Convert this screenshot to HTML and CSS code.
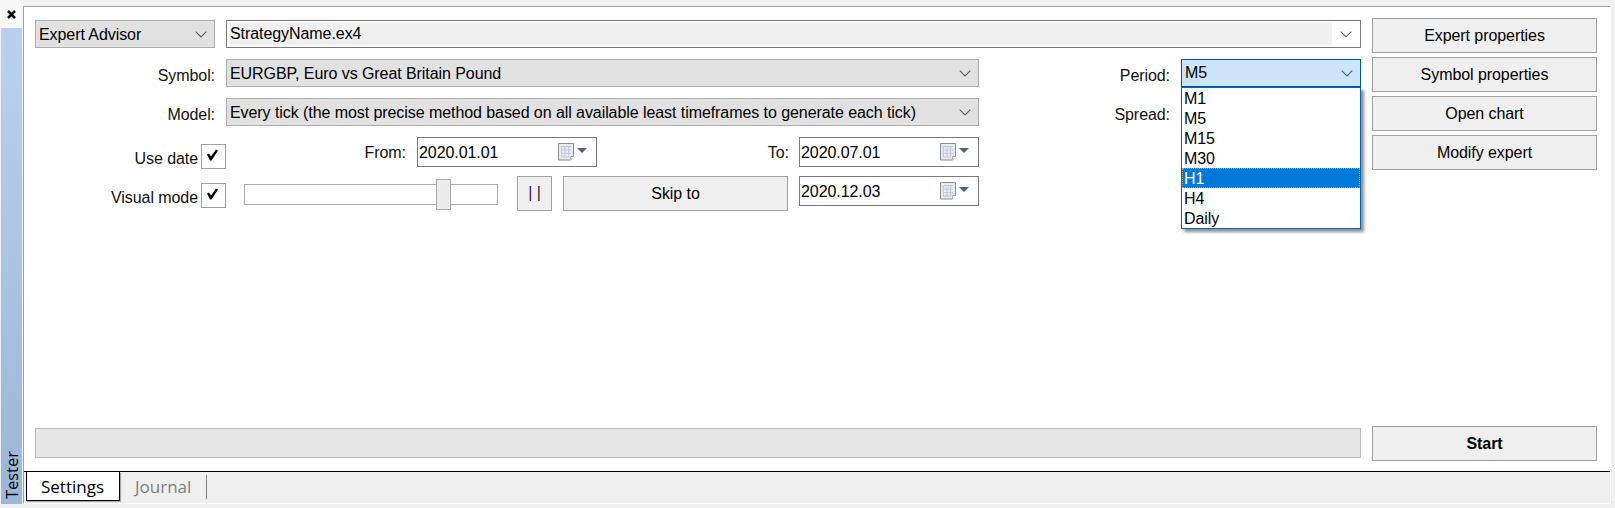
FILE: index.html
```html
<!DOCTYPE html>
<html lang="en">
<head>
<meta charset="utf-8">
<title>Tester</title>
<link rel="stylesheet" href="styles.css">
</head>
<body>
<svg class="defs" width="0" height="0" aria-hidden="true">
  <symbol id="chev" viewBox="0 0 12 7"><path d="M.7.7 6 6 11.3.7" fill="none" stroke="#5f5f5f" stroke-width="1.1"/></symbol>
  <symbol id="tick" viewBox="0 0 13 12"><path d="M1 5.500 3 4.500 5 7.500 10 .5 12 1.500 5.500 11.500H4z" fill="#000"/></symbol>
  <symbol id="cal" viewBox="0 0 30 18">
    <path d="M.5.5h15v13l-3 3.500H.5z" fill="#e6ebf3" stroke="#8b8b8b"/>
    <path d="M3 3.500h10M3 7h10M3 10.500h10M3 14h8M3.500 3v11M7 3v11M10.500 3v11" fill="none" stroke="#c3cad6"/>
    <path d="M12.500 17v-3.500H16" fill="#fff" stroke="#b0b0b0"/>
    <path d="M19 5h10l-5 5z" fill="#4a6283"/>
  </symbol>
</svg>
<div class="app">
  <aside class="side">
    <div class="close"><svg width="9" height="9" viewBox="0 0 9 9"><path d="M1 1l7 7M8 1 1 8" stroke="#000" stroke-width="2.500"/></svg></div>
    <div class="side-tab"><span class="side-label">Tester</span></div>
  </aside>
  <main class="panel">
    <div class="work">
      <div class="columns">
        <div class="form">
          <div class="row">
            <div class="select w-180"><span>Expert Advisor</span><svg class="chev"><use href="#chev"/></svg></div>
            <div class="combo"><div class="combo-field">StrategyName.ex4</div><svg class="chev"><use href="#chev"/></svg></div>
          </div>
          <div class="row">
            <label class="label w-180">Symbol:</label>
            <div class="select w-753"><span>EURGBP, Euro vs Great Britain Pound</span><svg class="chev"><use href="#chev"/></svg></div>
            <label class="label w-180">Period:</label>
            <div class="select w-180 focused"><span>M5</span><svg class="chev"><use href="#chev"/></svg>
              <ul class="menu">
                <li>M1</li><li>M5</li><li>M15</li><li>M30</li><li class="active">H1</li><li>H4</li><li>Daily</li>
              </ul>
            </div>
          </div>
          <div class="row">
            <label class="label w-180">Model:</label>
            <div class="select w-753"><span>Every tick (the most precise method based on all available least timeframes to generate each tick)</span><svg class="chev"><use href="#chev"/></svg></div>
            <label class="label w-180">Spread:</label>
          </div>
          <div class="row row-date">
            <div class="check-field"><span class="check-text">Use date</span><span class="check"><svg width="13" height="12"><use href="#tick"/></svg></span></div>
            <label class="label w-from from">From:</label>
            <div class="date"><span>2020.01.01</span><svg class="cal"><use href="#cal"/></svg></div>
            <label class="label w-to from">To:</label>
            <div class="date"><span>2020.07.01</span><svg class="cal"><use href="#cal"/></svg></div>
          </div>
          <div class="row row-visual">
            <div class="check-field"><span class="check-text">Visual mode</span><span class="check"><svg width="13" height="12"><use href="#tick"/></svg></span></div>
            <div class="slider"><span class="thumb"></span></div>
            <button class="btn pause">| |</button>
            <button class="btn skip">Skip to</button>
            <div class="date"><span>2020.12.03</span><svg class="cal"><use href="#cal"/></svg></div>
          </div>
        </div>
        <div class="actions">
          <button class="btn">Expert properties</button>
          <button class="btn">Symbol properties</button>
          <button class="btn">Open chart</button>
          <button class="btn">Modify expert</button>
        </div>
      </div>
      <div class="footer">
        <div class="progress"></div>
        <button class="btn start">Start</button>
      </div>
    </div>
    <nav class="tabs">
      <div class="tab current">Settings</div>
      <div class="tab">Journal</div>
    </nav>
  </main>
</div>
</body>
</html>
```
FILE: styles.css
```css
* { box-sizing: border-box; }
html, body { margin: 0; height: 100%; }
body {
  background: #f0f0f0;
  font-family: "Liberation Sans", Arial, sans-serif;
  font-size: 16px;
  letter-spacing: -.07px;
  color: #000;
  overflow: hidden;
}
.defs { position: absolute; }
.app { display: flex; height: 508px; }
.side { width: 23px; flex: none; display: flex; flex-direction: column; padding: 0 0 4px 1px; }
.close { height: 28px; display: flex; align-items: center; justify-content: center; padding-right: 1px; background: #f7f7f7; margin-left: -1px; }
.side-tab {
  flex: 1;
  width: 21px;
  background: linear-gradient(180deg, #b9d1ee 0%, #9bb7d7 100%);
  display: flex;
  align-items: flex-end;
  justify-content: center;
  padding-bottom: 5px;
}
.side-label {
  writing-mode: vertical-rl;
  transform: rotate(180deg);
  font-family: "Open Sans", sans-serif;
  font-size: 16.500px;
  line-height: 16px;
  letter-spacing: 0;
}
.panel {
  width: 1588px;
  height: 498px;
  margin-top: 6px;
  display: flex;
  flex-direction: column;
  background: #fff;
  border-top: 1px solid #a0a0a0;
  border-left: 1px solid #a0a0a0;
  border-right: 1px solid #fff;
  border-bottom: 1px solid #fff;
  flex: none;
}
.work { flex: 1; padding: 11px 13px 10px 11px; display: flex; flex-direction: column; justify-content: space-between; }
.columns, .footer { display: flex; gap: 11px; }
.form { width: 1326px; padding-top: 2px; display: flex; flex-direction: column; gap: 11px; }
.actions { width: 225px; display: flex; flex-direction: column; gap: 4px; }
.row { display: flex; gap: 11px; height: 28px; }
.row-date { height: 33px; gap: 0; margin-bottom: -5px; }
.row-visual { height: 35px; gap: 0; }
.w-180 { width: 180px; flex: none; }
.w-753 { width: 753px; flex: none; }
.w-from { width: 180px; flex: none; margin-right: 11px; }
.w-to { width: 192px; flex: none; margin-right: 10px; }
.label { text-align: right; line-height: 34px; color: #111; }
.from { line-height: 32px; }
.select {
  position: relative;
  display: flex;
  align-items: center;
  justify-content: space-between;
  background: #e1e1e1;
  border: 1px solid #adadad;
  padding: 1px 7px 0 3px;
  line-height: 24px;
}
.chev { width: 12px; height: 7px; flex: none; margin-top: -1px; }
.focused { background: #cce4f7; border-color: #005499; padding-top: 0; }
.focused .chev, .combo .chev { margin-top: 0; }
.combo {
  width: 1135px;
  display: flex;
  align-items: center;
  justify-content: space-between;
  background: #fff;
  border: 1px solid #7a7a7a;
  padding: 2px 8px 2px 2px;
}
.combo-field { flex: 1; background: #f0f0f0; height: 22px; line-height: 22px; padding-left: 1px; margin-right: 8px; }
.menu {
  position: absolute;
  top: 27px;
  left: -1px;
  width: 180px;
  margin: 0;
  padding: 0;
  list-style: none;
  background: #fff;
  border: 1px solid #0067b5;
  box-shadow: 3px 3px 3px rgba(0,0,0,.45);
  z-index: 2;
}
.menu li { height: 20px; line-height: 22px; padding-left: 2px; }
.menu .active { background: #0078d7; color: #fff; outline: 1px dotted #d89a4a; outline-offset: -1px; }
.check-field { width: 191px; flex: none; display: flex; align-items: center; justify-content: flex-end; gap: 3px; height: 25px; margin-top: 7px; line-height: 25px; color: #111; }
.check-text { padding-top: 3px; }
.check { width: 25px; height: 25px; flex: none; display: flex; justify-content: center; padding: 4px 3px 0 0; border: 1px solid #a0a0a0; background: #fff; }
.date {
  width: 180px;
  height: 30px;
  flex: none;
  display: flex;
  align-items: center;
  justify-content: space-between;
  border: 1px solid #7a7a7a;
  background: #fff;
  padding: 0 8px 0 1px;
  line-height: 28px;
}
.date span { padding-top: 1px; }
.cal { width: 30px; height: 18px; flex: none; }
.slider { position: relative; width: 254px; height: 21px; flex: none; margin: 8px 19px 0 18px; border: 1px solid #adadad; background: #fff; }
.thumb { position: absolute; left: 191px; top: -6px; width: 15px; height: 31px; background: #ececec; border: 1px solid #a8a8a8; }
.btn {
  height: 35px;
  background: #efefef;
  border: 1px solid #a0a0a0;
  padding: 0;
  font: inherit;
  letter-spacing: inherit;
  color: #000;
  line-height: 1;
}
.pause { width: 35px; flex: none; margin-right: 11px; color: #3c1040; padding-bottom: 1px; }
.skip { width: 225px; flex: none; margin-right: 11px; }
.footer { align-items: flex-start; }
.progress { width: 1326px; height: 30px; margin-top: 2px; background: #e6e6e6; border: 1px solid #bcbcbc; }
.start { width: 225px; font-weight: bold; }
.tabs {
  height: 32px;
  flex: none;
  display: flex;
  background: #efefef;
  border-top: 1px solid #000;
  padding-left: 2px;
  font-family: "Open Sans", sans-serif;
  font-size: 17px;
  letter-spacing: 0;
}
.tab { height: 29px; line-height: 30px; }
.current { width: 94px; padding-left: 14px; background: #fff; border-left: 1px solid #000; border-right: 1px solid #000; border-bottom: 1px solid #000; box-shadow: 1px 1px 1px #aaa; }
.tab:not(.current) { color: #808080; margin-top: 3px; width: 87px; padding-left: 15px; height: 24px; line-height: 24px; border-right: 1px solid #808080; }
```
